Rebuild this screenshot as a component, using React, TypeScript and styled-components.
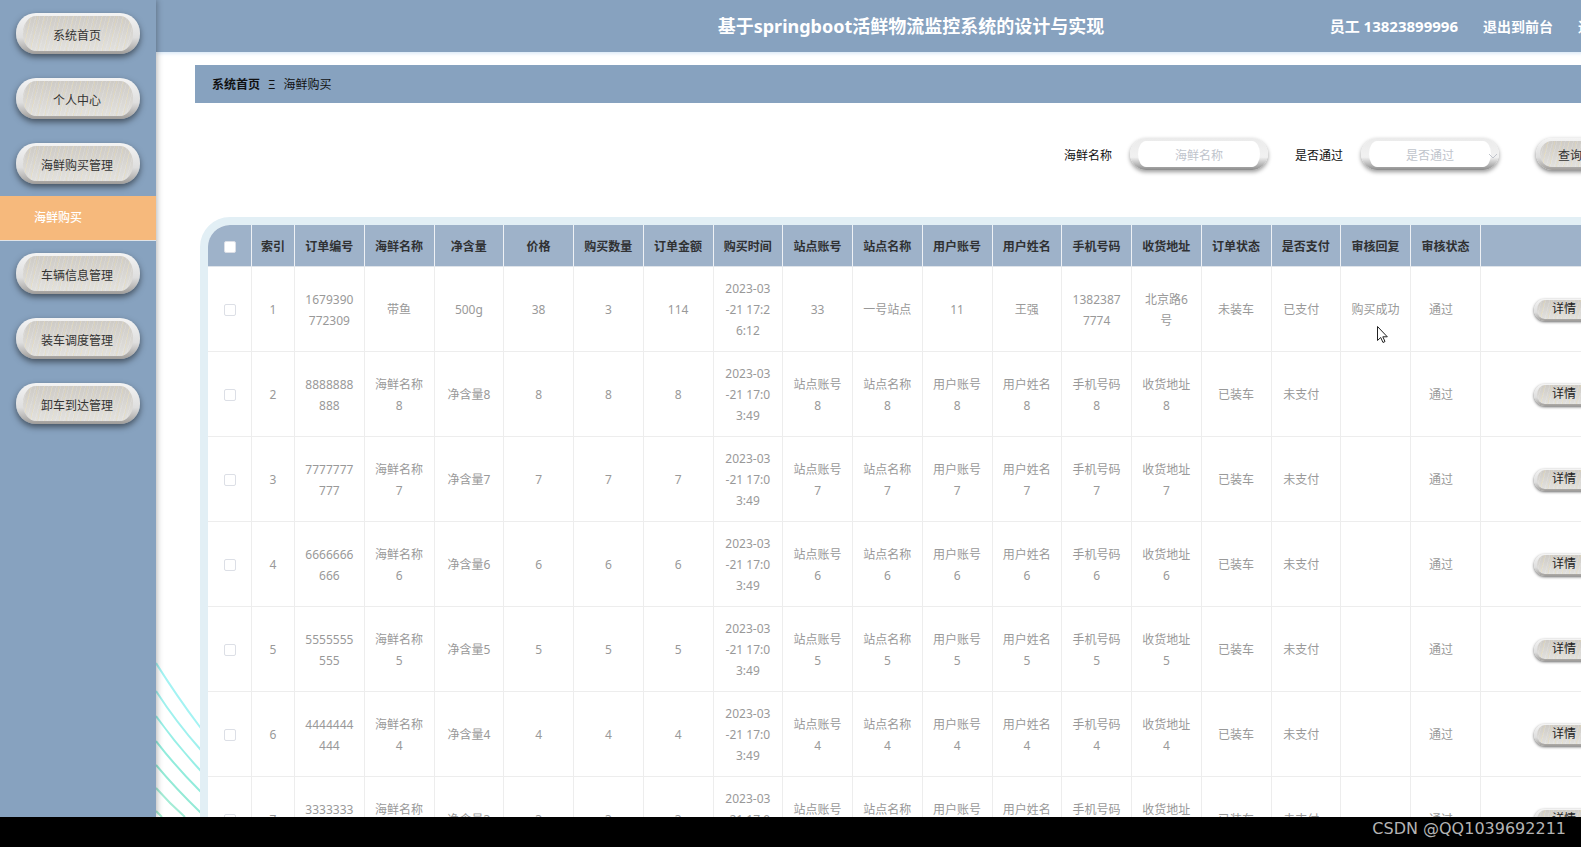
import React from "react";
import styled, { createGlobalStyle, css } from "styled-components";

const steel = "#87a2bf";

const GlobalStyle = createGlobalStyle`
  * { box-sizing: border-box; }
  body {
    margin: 0;
    background: #000;
    font: 12px/21px "Noto Sans", "Noto Sans CJK SC", sans-serif;
    color: #111;
  }
  button, input, select { font: inherit; color: inherit; }
  a { color: inherit; text-decoration: none; }
`;

const Screen = styled.div`
  display: flex;
  flex-direction: column;
  height: 100vh;
  overflow: hidden;
`;

const Viewport = styled.div`
  position: relative;
  flex: 1;
  min-height: 0;
  overflow: hidden;
  background: #fff;
`;

const Shell = styled.div`
  display: flex;
  min-width: 1666px;
  height: 100%;
`;

const Sidebar = styled.nav`
  position: relative;
  z-index: 1;
  flex: 0 0 156px;
  padding-top: 1px;
  background: ${steel};
  box-shadow: 1px 0 6px rgba(0, 0, 0, 0.3);
`;

const MenuRow = styled.div`
  display: flex;
  align-items: center;
  justify-content: center;
  height: 65px;
`;

const wood = css`
  background:
    repeating-linear-gradient(102deg, rgba(240, 222, 165, 0.3) 0 1px, transparent 1px 7px) padding-box,
    repeating-linear-gradient(105deg, rgba(255, 255, 255, 0.12) 0 1px, transparent 1px 4px) padding-box,
    linear-gradient(#cecbc6, #e2e1de) padding-box,
    linear-gradient(#f4f4f4, #dedede 60%, #9f9c99) border-box;
`;

const MenuButton = styled.button`
  width: 124px;
  height: 41px;
  padding: 3px 2px 0 0;
  border: solid transparent;
  border-width: 3px 7px;
  border-radius: 20px;
  color: #333;
  ${wood}
  box-shadow: 0 3px 6px rgba(0, 0, 0, 0.5);
`;

const SubLink = styled.a`
  display: block;
  height: 45px;
  padding-left: 34px;
  border-bottom: 1px solid #dfe3e8;
  background: #f6b97c;
  color: #fff;
  font-weight: 500;
  line-height: 44px;
`;

const Main = styled.main`
  position: relative;
  flex: 1;
  min-width: 0;
`;

const TopBar = styled.header`
  display: grid;
  grid-template-columns: 1fr auto 1fr;
  align-items: center;
  height: 52px;
  background: ${steel};
  box-shadow: 0 1px 4px rgba(130, 180, 230, 0.4);
  color: #fff;
`;

const Title = styled.h1`
  grid-column: 2;
  margin: 0;
  font-size: 18px;
  line-height: 52px;
`;

const Account = styled.div`
  display: flex;
  justify-content: flex-end;
  gap: 25px;
  padding-right: 32px;
  font-size: 14px;
  font-weight: 700;
  white-space: nowrap;
`;

const User = styled.span`
  font-size: 15px;
`;

const Waves = styled.svg`
  position: absolute;
  left: 0;
  bottom: 0;
  width: 200px;
  height: 160px;
  fill: none;
  stroke-width: 2;
`;

const Content = styled.div`
  position: relative;
  padding: 13px 0 0 39px;
`;

const Crumbs = styled.nav`
  display: flex;
  align-items: center;
  gap: 8px;
  height: 38px;
  padding-left: 17px;
  background: ${steel};
`;

const Filters = styled.form`
  display: flex;
  align-items: center;
  justify-content: flex-end;
  height: 114px;
  padding: 0 62px 12px 0;
`;

const Field = styled.div`
  display: flex;
  align-items: center;
  gap: 18px;
  margin-right: 27px;
`;

const Label = styled.label`
  padding-top: 2px;
`;

const pill = css`
  width: 138px;
  height: 32px;
  padding: 3px 0 0;
  border: solid transparent;
  border-width: 3px 8px;
  border-radius: 16px;
  background:
    linear-gradient(#fff, #fff) padding-box,
    linear-gradient(#ebebeb, #f1f1f1 60%, #8c8c8c) border-box;
  box-shadow: 0 2px 4px rgba(0, 0, 0, 0.4);
  color: #c0c4cc;
  text-align: center;
`;

const TextBox = styled.input`
  ${pill}
  &::placeholder { color: #c0c4cc; opacity: 1; }
`;

const SelectWrap = styled.div`
  position: relative;
  display: flex;
`;

const Select = styled.select`
  ${pill}
  appearance: none;
  text-align-last: center;
`;

const Chevron = styled.svg`
  position: absolute;
  right: 1px;
  top: 13px;
  width: 10px;
  height: 10px;
  fill: none;
  stroke: #c0c4cc;
  pointer-events: none;
`;

const SearchButton = styled.button`
  width: 68px;
  height: 32px;
  margin-left: 10px;
  padding: 3px 0 0;
  border: solid transparent;
  border-width: 3px 4px;
  border-radius: 16px;
  color: #333;
  ${wood}
  box-shadow: 0 2px 4px rgba(0, 0, 0, 0.5);
`;

const TableFrame = styled.section`
  margin-left: 5px;
  border: 8px solid #e2eff5;
  border-radius: 30px;
  background: #fff;
  overflow: hidden;
`;

const Table = styled.table`
  width: 100%;
  min-width: 1573px;
  border-collapse: separate;
  border-spacing: 0;
  table-layout: fixed;
  text-align: center;
  color: #999;
`;

const NarrowCol = styled.col<{ $width: number }>`
  width: ${(p) => p.$width}px;
`;

const Th = styled.th`
  height: 42px;
  padding: 2px 0 0;
  border-right: 1px solid #eef1f5;
  border-bottom: 1px solid #dfe4ea;
  background: #9eb2c9;
  color: #303133;
`;

const Td = styled.td<{ $tail?: boolean }>`
  height: 85px;
  padding: 1px ${(p) => (p.$tail ? 9 : 0)}px 0 0;
  border-right: 1px solid #ededed;
  border-bottom: 1px solid #ededed;
  white-space: pre-line;
`;

const ActionTd = styled(Td)`
  padding-left: 53px;
  text-align: left;
`;

const Check = styled.input`
  display: block;
  width: 12px;
  height: 12px;
  margin: 0 auto;
  border: 1px solid #dcdfe6;
  border-radius: 2px;
  background: #fff;
  appearance: none;
`;

const DetailButton = styled.button`
  width: 60px;
  height: 22px;
  padding: 0;
  border: solid transparent;
  border-width: 1px 3px 2px;
  border-radius: 11px;
  color: #222;
  line-height: 18px;
  ${wood}
  box-shadow: 0 1px 3px rgba(0, 0, 0, 0.6);
`;

const Pointer = styled.svg`
  position: absolute;
  left: 1376px;
  top: 325px;
  width: 13px;
  height: 19px;
`;

const Watermark = styled.footer`
  flex: 0 0 30px;
  padding-right: 15px;
  background: #000;
  color: #b4b4b4;
  font: 16px/24px "DejaVu Sans", sans-serif;
  text-align: right;
`;

const columns = [
  "订单编号", "海鲜名称", "净含量", "价格", "购买数量", "订单金额", "购买时间", "站点账号", "站点名称",
  "用户账号", "用户姓名", "手机号码", "收货地址", "订单状态", "是否支付", "审核回复", "审核状态",
];

const tailColumns = ["是否支付", "审核状态"];

const sampleRow = (n: number): string[] => {
  const d = String(n);
  return [
    `${d.repeat(7)}\n${d.repeat(3)}`, `海鲜名称\n${d}`, `净含量${d}`, d, d, d, "2023-03\n-21 17:0\n3:49",
    `站点账号\n${d}`, `站点名称\n${d}`, `用户账号\n${d}`, `用户姓名\n${d}`, `手机号码\n${d}`,
    `收货地址\n${d}`, "已装车", "未支付", "", "通过",
  ];
};

const rows: string[][] = [
  [
    "1679390\n772309", "带鱼", "500g", "38", "3", "114", "2023-03\n-21 17:2\n6:12", "33", "一号站点", "11",
    "王强", "1382387\n7774", "北京路6\n号", "未装车", "已支付", "购买成功", "通过",
  ],
  ...[8, 7, 6, 5, 4, 3].map(sampleRow),
];

const MenuItem = ({ label }: { label: string }) => (
  <MenuRow>
    <MenuButton type="button">{label}</MenuButton>
  </MenuRow>
);

export default function App() {
  return (
    <Screen>
      <GlobalStyle />
      <Viewport>
        <Shell>
          <Sidebar>
            <MenuItem label="系统首页" />
            <MenuItem label="个人中心" />
            <MenuItem label="海鲜购买管理" />
            <SubLink href="#purchase">海鲜购买</SubLink>
            <MenuItem label="车辆信息管理" />
            <MenuItem label="装车调度管理" />
            <MenuItem label="卸车到达管理" />
          </Sidebar>
          <Main>
            <Waves viewBox="0 0 200 160" aria-hidden="true">
              <path stroke="#a4f3f3" d="M0 6Q20 38 44 70T110 145" />
              <path stroke="#a0f1ee" d="M0 34Q20 65 44 92T105 160" />
              <path stroke="#98efe6" d="M0 59Q20 87 44 113T90 160" />
              <path stroke="#92ecdc" d="M0 84Q20 110 44 134L70 160" />
              <path stroke="#94ead6" d="M0 108Q20 132 44 155L50 160" />
              <path stroke="#a4ecd6" d="M0 131Q14 147 29 160" />
              <path stroke="#a4ecd0" d="M0 154L6 160" />
            </Waves>
            <TopBar>
              <Title>基于springboot活鲜物流监控系统的设计与实现</Title>
              <Account>
                <User>员工 13823899996</User>
                <a href="#front">退出到前台</a>
                <a href="#logout">退出登录</a>
              </Account>
            </TopBar>
            <Content>
              <Crumbs>
                <a href="#home"><b>系统首页</b></a>
                <span>Ξ</span>
                <span>海鲜购买</span>
              </Crumbs>
              <Filters>
                <Field>
                  <Label htmlFor="name">海鲜名称</Label>
                  <TextBox id="name" placeholder="海鲜名称" />
                </Field>
                <Field>
                  <Label htmlFor="passed">是否通过</Label>
                  <SelectWrap>
                    <Select id="passed">
                      <option>是否通过</option>
                    </Select>
                    <Chevron viewBox="0 0 10 10"><path d="M1 3l4 4 4-4" /></Chevron>
                  </SelectWrap>
                </Field>
                <SearchButton type="button">查询</SearchButton>
              </Filters>
              <TableFrame>
                <Table>
                  <colgroup>
                    <NarrowCol $width={44} />
                    <NarrowCol $width={43} />
                    {columns.map((c) => <col key={c} />)}
                    <NarrowCol $width={300} />
                  </colgroup>
                  <thead>
                    <tr>
                      <Th><Check type="checkbox" aria-label="全选" /></Th>
                      <Th>索引</Th>
                      {columns.map((c) => <Th key={c}>{c}</Th>)}
                      <Th />
                    </tr>
                  </thead>
                  <tbody>
                    {rows.map((row, i) => (
                      <tr key={i}>
                        <Td><Check type="checkbox" aria-label={`选择 ${i + 1}`} /></Td>
                        <Td>{i + 1}</Td>
                        {row.map((text, c) => (
                          <Td key={c} $tail={tailColumns.includes(columns[c])}>{text}</Td>
                        ))}
                        <ActionTd><DetailButton type="button">详情</DetailButton></ActionTd>
                      </tr>
                    ))}
                  </tbody>
                </Table>
              </TableFrame>
            </Content>
          </Main>
        </Shell>
        <Pointer viewBox="0 0 13 19" aria-hidden="true">
          <path d="M1.5 1.5v14l3.2-3 2.3 5 2-1-2.2-4.700h4.500z" fill="#fff" stroke="#222" />
        </Pointer>
      </Viewport>
      <Watermark>CSDN @QQ1039692211</Watermark>
    </Screen>
  );
}
